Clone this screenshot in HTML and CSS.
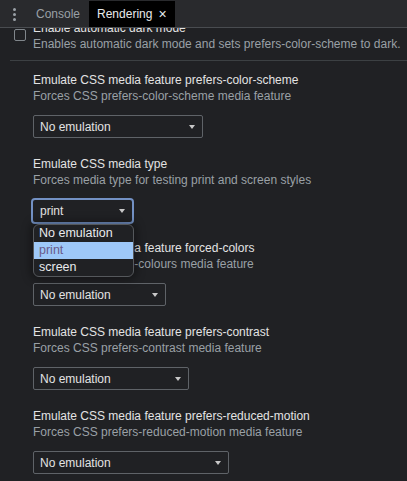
FILE: index.html
```html
<!DOCTYPE html>
<html>
<head>
<meta charset="utf-8">
<link rel="stylesheet" href="styles.css">
</head>
<body>
<div class="tabbar">
  <div class="kebab"><span></span><span></span><span></span></div>
  <div class="tab">Console</div>
  <div class="tab active">Rendering <span class="close">×</span></div>
</div>
<div class="viewport">
  <div class="scroller">
    <div class="check-section">
      <div class="checkbox"></div>
      <div class="check-text">
        <div class="title">Enable automatic dark mode</div>
        <div class="desc">Enables automatic dark mode and sets prefers-color-scheme to dark.</div>
      </div>
    </div>
    <div class="divider"></div>
    <div class="section">
      <div class="title">Emulate CSS media feature prefers-color-scheme</div>
      <div class="desc">Forces CSS prefers-color-scheme media feature</div>
      <div class="select w170"><span>No emulation</span><i class="arrow"></i></div>
    </div>
    <div class="section">
      <div class="title">Emulate CSS media type</div>
      <div class="desc">Forces media type for testing print and screen styles</div>
      <div class="select w99 focused"><span>print</span><i class="arrow"></i>
        <div class="popup">
          <div class="opt">No emulation</div>
          <div class="opt sel">print</div>
          <div class="opt">screen</div>
        </div>
      </div>
    </div>
    <div class="section">
      <div class="title">Emulate CSS media feature forced-colors</div>
      <div class="desc">Forces CSS forced-colours media feature</div>
      <div class="select w133"><span>No emulation</span><i class="arrow"></i></div>
    </div>
    <div class="section">
      <div class="title">Emulate CSS media feature prefers-contrast</div>
      <div class="desc">Forces CSS prefers-contrast media feature</div>
      <div class="select w156"><span>No emulation</span><i class="arrow"></i></div>
    </div>
    <div class="section">
      <div class="title">Emulate CSS media feature prefers-reduced-motion</div>
      <div class="desc">Forces CSS prefers-reduced-motion media feature</div>
      <div class="select w196"><span>No emulation</span><i class="arrow"></i></div>
    </div>
  </div>
</div>
</body>
</html>
```

FILE: styles.css
```css
* { box-sizing: border-box; }
html, body {
  margin: 0;
  padding: 0;
  background: #202124;
  width: 407px;
  height: 481px;
  overflow: hidden;
  font-family: "Liberation Sans", Arial, sans-serif;
  font-size: 12px;
  color: #e3e3e3;
}
.tabbar {
  height: 28px;
  background: #292a2d;
  border-bottom: 1px solid #494c50;
  display: flex;
  align-items: stretch;
  padding-top: 1px;
}
.kebab {
  width: 28px;
  display: flex;
  flex-direction: column;
  align-items: center;
  justify-content: center;
  gap: 2px;
}
.kebab span {
  width: 3px;
  height: 3px;
  border-radius: 50%;
  background: #9aa0a6;
}
.tab {
  display: flex;
  align-items: center;
  padding: 0 9px 0 8px;
  color: #9aa0a6;
  font-size: 12px;
}
.tab.active {
  background: #000;
  color: #e8eaed;
  padding: 0 8px 0 8px;
}
.close {
  margin-left: 6px;
  font-size: 14px;
  color: #e8eaed;
}
.viewport {
  height: 453px;
  overflow: hidden;
}
.scroller {
  margin-top: -8px;
}
.check-section {
  display: flex;
  padding: 0 0 8px 14px;
}
.checkbox {
  width: 12px;
  height: 12px;
  border: 1px solid #80868b;
  border-radius: 2px;
  margin-top: 9px;
  margin-right: 7px;
  flex: none;
}
.title {
  line-height: 16px;
  color: #e3e3e3;
  white-space: nowrap;
}
.desc {
  line-height: 16px;
  color: #9aa0a6;
  white-space: nowrap;
}
.divider {
  height: 1px;
  background: #3c4043;
  margin-left: 10px;
}
.section {
  padding: 11px 0 7px 33px;
}
.select {
  position: relative;
  margin-top: 11px;
  height: 23px;
  border: 1px solid #5f6368;
  border-radius: 2px;
  display: flex;
  align-items: center;
  padding-left: 6px;
  color: #e3e3e3;
}
.select.focused {
  border: 2px solid #7391c4;
  border-radius: 4px;
  margin-left: -2px;
  padding-left: 7px;
  height: 26px;
  margin-top: 10px;
  margin-bottom: -2px;
}
.w170 { width: 170px; }
.w99 { width: 103px; }
.w133 { width: 133px; }
.w156 { width: 156px; }
.w196 { width: 196px; }
.arrow {
  position: absolute;
  right: 7px;
  top: 50%;
  margin-top: -2px;
  width: 0;
  height: 0;
  border-left: 3.5px solid transparent;
  border-right: 3.5px solid transparent;
  border-top: 4px solid #c8c8c8;
}
.popup {
  position: absolute;
  left: 0;
  top: 24px;
  width: 101px;
  background: #202124;
  border: 1px solid #55585c;
  border-radius: 6px;
  overflow: hidden;
  box-shadow: 0 0 8px 3px rgba(0, 0, 0, 0.35);
  z-index: 5;
}
.opt {
  height: 17px;
  line-height: 17px;
  padding-left: 5px;
  color: #e8eaed;
  font-size: 12.5px;
}
.opt.sel {
  background: #9ec8f8;
  color: #6a5b8a;
}
```
